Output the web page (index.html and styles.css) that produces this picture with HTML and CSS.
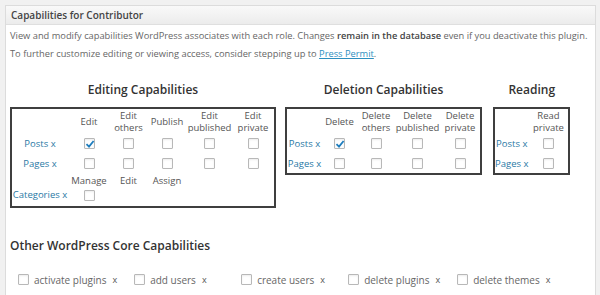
FILE: index.html
```html
<!DOCTYPE html>
<html lang="en">
<head>
    <meta charset="UTF-8">
    <title>Capabilities for Contributor</title>
    <link rel="stylesheet" href="styles.css">
</head>
<body>
    <div class="postbox">
        <h3 class="hndle">Capabilities for Contributor</h3>
        <div class="inside">
            <p class="intro">View and modify capabilities WordPress associates with each role. Changes <strong>remain in the database</strong> even if you deactivate this plugin.<br>
            To further customize editing or viewing access, consider stepping up to <a href="#">Press Permit</a>.</p>

            <div class="cap-groups">
                <div class="cap-group">
                    <h4>Editing Capabilities</h4>
                    <table class="cap-table">
                        <colgroup>
                            <col class="e-label"><col class="e1"><col class="e2"><col class="e3"><col class="e4"><col class="e5">
                        </colgroup>
                        <tr class="head">
                            <th></th><th>Edit</th><th>Edit<br>others</th><th>Publish</th><th>Edit<br>published</th><th>Edit<br>private</th>
                        </tr>
                        <tr>
                            <td class="type">Posts x</td>
                            <td><span class="cb checked"><svg viewBox="0 0 12 12"><path d="M2.5 6.2 L5 8.6 L9.6 3"/></svg></span></td>
                            <td><span class="cb"></span></td><td><span class="cb"></span></td><td><span class="cb"></span></td><td><span class="cb"></span></td>
                        </tr>
                        <tr>
                            <td class="type">Pages x</td>
                            <td><span class="cb"></span></td><td><span class="cb"></span></td><td><span class="cb"></span></td><td><span class="cb"></span></td><td><span class="cb"></span></td>
                        </tr>
                        <tr class="head tax">
                            <th></th><th>Manage</th><th>Edit</th><th>Assign</th><th></th><th></th>
                        </tr>
                        <tr class="last">
                            <td class="type">Categories x</td>
                            <td><span class="cb"></span></td><td></td><td></td><td></td><td></td>
                        </tr>
                    </table>
                </div>

                <div class="cap-group">
                    <h4>Deletion Capabilities</h4>
                    <table class="cap-table">
                        <colgroup>
                            <col class="d-label"><col class="d1"><col class="d2"><col class="d3"><col class="d4">
                        </colgroup>
                        <tr class="head">
                            <th></th><th>Delete</th><th>Delete<br>others</th><th>Delete<br>published</th><th>Delete<br>private</th>
                        </tr>
                        <tr>
                            <td class="type">Posts x</td>
                            <td><span class="cb checked"><svg viewBox="0 0 12 12"><path d="M2.5 6.2 L5 8.6 L9.6 3"/></svg></span></td>
                            <td><span class="cb"></span></td><td><span class="cb"></span></td><td><span class="cb"></span></td>
                        </tr>
                        <tr>
                            <td class="type">Pages x</td>
                            <td><span class="cb"></span></td><td><span class="cb"></span></td><td><span class="cb"></span></td><td><span class="cb"></span></td>
                        </tr>
                    </table>
                </div>

                <div class="cap-group">
                    <h4>Reading</h4>
                    <table class="cap-table reading">
                        <colgroup>
                            <col class="r-label"><col class="r1">
                        </colgroup>
                        <tr class="head">
                            <th></th><th>Read<br>private</th>
                        </tr>
                        <tr>
                            <td class="type">Posts x</td>
                            <td><span class="cb"></span></td>
                        </tr>
                        <tr>
                            <td class="type">Pages x</td>
                            <td><span class="cb"></span></td>
                        </tr>
                    </table>
                </div>
            </div>

            <h4 class="other-title">Other WordPress Core Capabilities</h4>
            <div class="other-caps">
                <label class="cap-item"><span class="cb"></span>activate plugins<span class="x">x</span></label>
                <label class="cap-item"><span class="cb"></span>add users<span class="x">x</span></label>
                <label class="cap-item"><span class="cb"></span>create users<span class="x">x</span></label>
                <label class="cap-item"><span class="cb"></span>delete plugins<span class="x">x</span></label>
                <label class="cap-item"><span class="cb"></span>delete themes<span class="x">x</span></label>
            </div>
        </div>
    </div>
</body>
</html>
```

FILE: styles.css
```css
body {
    margin: 0;
    padding: 5px 5px 0 5px;
    background: #f1f1f1;
    font-family: 'Open Sans', sans-serif;
    color: #555;
    height: 290px;
    overflow: hidden;
}
.postbox {
    width: 591px;
    height: 300px;
    background: #fff;
    border: 1px solid #dcdcdc;
    box-sizing: border-box;
}
.hndle {
    margin: 0;
    height: 18px;
    line-height: 18px;
    padding: 0 5px;
    font-size: 10px;
    font-weight: 600;
    color: #444;
    background: linear-gradient(to bottom, #f9f9f9, #ececec);
    border-bottom: 1px solid #dfdfdf;
}
.inside {
    padding: 0 4px;
}
.intro {
    margin: 2px 0 0 0;
    font-size: 9.3px;
    line-height: 18px;
    color: #666;
    white-space: nowrap;
}
.intro strong {
    color: #444;
    font-weight: 600;
}
.intro a {
    color: #2e8fbf;
}
.cap-groups {
    display: flex;
    align-items: flex-start;
    gap: 9px;
    margin-top: 18px;
}
.cap-group {
    display: flex;
    flex-direction: column;
    align-items: center;
}
.cap-group h4 {
    margin: 0 0 8px 0;
    font-size: 12px;
    line-height: 18px;
    font-weight: 600;
    color: #333;
}
.cap-table {
    border: 2px solid #3f3f3f;
    border-collapse: separate;
    border-spacing: 0;
    table-layout: fixed;
    font-size: 9.5px;
    padding-top: 1px;
}
.cap-table th,
.cap-table td {
    padding: 0;
    text-align: center;
    vertical-align: middle;
    white-space: nowrap;
}
.cap-table th {
    font-weight: 400;
    line-height: 11.5px;
    color: #555;
    height: 23px;
}
.cap-table tr.tax th {
    height: 11px;
    padding-top: 2px;
}
.cap-table td {
    height: 20px;
}
.cap-table tr.last td {
    height: 16px;
    padding-bottom: 3px;
}
.cap-table td.type {
    color: #2a79a5;
}
.e-label { width: 56px; }
.e1 { width: 42px; }
.e2 { width: 37px; }
.e3 { width: 40px; }
.e4 { width: 45px; }
.e5 { width: 42px; }
.d-label { width: 35px; }
.d1 { width: 35px; }
.d2 { width: 38px; }
.d3 { width: 45px; }
.d4 { width: 40px; }
.r-label { width: 33px; }
.r1 { width: 40px; }
.cap-groups .cap-group:nth-child(3) { margin-left: 2px; }
.cb {
    display: inline-block;
    width: 11px;
    height: 11px;
    border: 1px solid #b8b8b8;
    border-radius: 1px;
    background: #fff;
    box-shadow: inset 0 1px 2px rgba(0, 0, 0, 0.08);
    box-sizing: border-box;
    vertical-align: middle;
    position: relative;
}
.cb svg {
    position: absolute;
    left: -1px;
    top: -1px;
    width: 12px;
    height: 12px;
}
.cb svg path {
    fill: none;
    stroke: #1e7dbd;
    stroke-width: 1.8;
}
.other-title {
    margin: 29px 0 0 0;
    font-size: 12px;
    line-height: 18px;
    font-weight: 600;
    color: #333;
}
.other-caps {
    display: flex;
    gap: 17px;
    margin-top: 18px;
    padding-left: 8px;
}
.cap-item {
    display: flex;
    align-items: center;
    min-width: 90px;
    font-size: 10px;
    color: #666;
}
.cap-item .cb {
    margin-right: 5px;
}
.cap-item .x {
    margin-left: 6px;
    font-size: 9px;
    color: #555;
}
```
